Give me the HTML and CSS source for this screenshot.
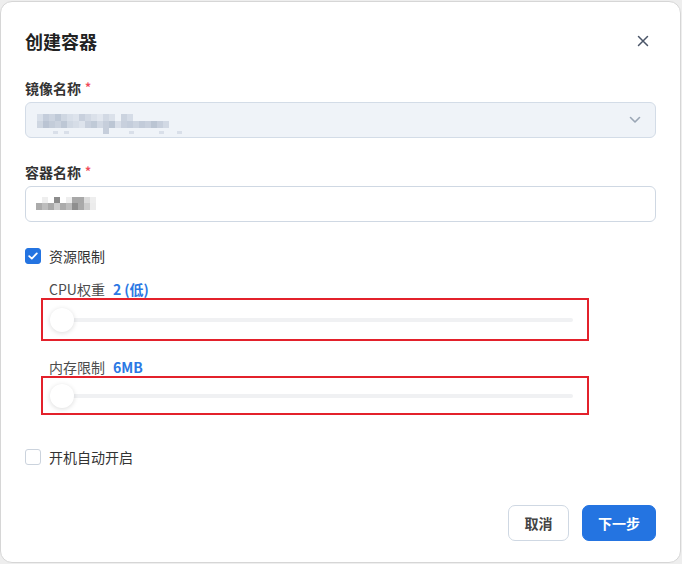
FILE: index.html
```html
<!DOCTYPE html>
<html lang="zh-CN">
<head>
  <meta charset="UTF-8">
  <title>创建容器</title>
  <meta name="viewport" content="width=device-width, initial-scale=1.0">
  <link rel="stylesheet" href="styles.css">
</head>
<body>
<div class="dialog">
  <div class="dialog-head">
    <div class="dialog-title">创建容器</div>
    <button class="close-btn" aria-label="关闭">
      <svg width="12" height="12" viewBox="0 0 12 12"><path d="M1.5 1.5L10.5 10.5M10.5 1.5L1.5 10.5" stroke="#4a5568" stroke-width="1.5" stroke-linecap="round"/></svg>
    </button>
  </div>

  <div class="field">
    <div class="field-label">镜像名称<span class="req">*</span></div>
    <div class="select">
      <svg class="mosaic" width="160" height="24" viewBox="0 0 160 24">
        <rect x="4" y="3" width="6" height="7" fill="#d8dfe9"/>
        <rect x="10" y="3" width="6" height="7" fill="#c4cddb"/>
        <rect x="16" y="3" width="6" height="7" fill="#ccd4e0"/>
        <rect x="22" y="3" width="6" height="7" fill="#bfc9d7"/>
        <rect x="28" y="3" width="6" height="7" fill="#cfd7e2"/>
        <rect x="34" y="3" width="6" height="7" fill="#d8dfe9"/>
        <rect x="40" y="3" width="6" height="7" fill="#dde3ec"/>
        <rect x="46" y="3" width="6" height="7" fill="#c8d0dd"/>
        <rect x="52" y="3" width="6" height="7" fill="#d2d9e4"/>
        <rect x="58" y="3" width="6" height="7" fill="#dbe1ea"/>
        <rect x="64" y="3" width="6" height="7" fill="#e2e7ef"/>
        <rect x="70" y="3" width="6" height="7" fill="#d2d9e4"/>
        <rect x="76" y="3" width="6" height="7" fill="#dbe1ea"/>
        <rect x="88" y="3" width="6" height="7" fill="#cbd3df"/>
        <rect x="94" y="3" width="6" height="7" fill="#d5dce7"/>
        <rect x="4" y="10" width="6" height="7" fill="#ced6e1"/>
        <rect x="10" y="10" width="6" height="7" fill="#bac4d3"/>
        <rect x="16" y="10" width="6" height="7" fill="#c3ccd9"/>
        <rect x="22" y="10" width="6" height="7" fill="#cad2de"/>
        <rect x="28" y="10" width="6" height="7" fill="#bdc7d5"/>
        <rect x="34" y="10" width="6" height="7" fill="#d0d8e3"/>
        <rect x="40" y="10" width="6" height="7" fill="#d6dde7"/>
        <rect x="46" y="10" width="6" height="7" fill="#dde3ec"/>
        <rect x="52" y="10" width="6" height="7" fill="#c8d0dd"/>
        <rect x="58" y="10" width="6" height="7" fill="#c0cad7"/>
        <rect x="64" y="10" width="6" height="7" fill="#d2d9e4"/>
        <rect x="70" y="10" width="6" height="7" fill="#c6cedb"/>
        <rect x="76" y="10" width="6" height="7" fill="#bcc6d4"/>
        <rect x="82" y="10" width="6" height="7" fill="#d9dfe9"/>
        <rect x="88" y="10" width="6" height="7" fill="#c8d0dd"/>
        <rect x="94" y="10" width="6" height="7" fill="#c4cddb"/>
        <rect x="100" y="10" width="6" height="7" fill="#ccd4e0"/>
        <rect x="106" y="10" width="6" height="7" fill="#c2cbd9"/>
        <rect x="112" y="10" width="6" height="7" fill="#c8d0dd"/>
        <rect x="118" y="10" width="6" height="7" fill="#bbc5d3"/>
        <rect x="124" y="10" width="6" height="7" fill="#c7cfdc"/>
        <rect x="130" y="10" width="6" height="7" fill="#d2d9e4"/>
        <rect x="70" y="17" width="6" height="6" fill="#c6cedb"/>
        <rect x="20" y="20" width="5" height="3" fill="#d9dfe9"/>
        <rect x="31" y="20" width="5" height="3" fill="#d9dfe9"/>
        <rect x="96" y="20" width="5" height="3" fill="#d9dfe9"/>
        <rect x="126" y="20" width="5" height="3" fill="#d9dfe9"/>
        <rect x="144" y="20" width="5" height="3" fill="#d9dfe9"/>
      </svg>
      <svg class="chevron" width="12" height="8" viewBox="0 0 12 8"><path d="M1.5 1.5L6 6L10.5 1.5" fill="none" stroke="#9aa6b5" stroke-width="1.6" stroke-linecap="round" stroke-linejoin="round"/></svg>
    </div>
  </div>

  <div class="field">
    <div class="field-label">容器名称<span class="req">*</span></div>
    <div class="input">
      <svg class="mosaic" width="64" height="16" viewBox="0 0 64 16">
        <rect x="6" y="1" width="6" height="6" fill="#eeeeee"/>
        <rect x="18" y="1" width="6" height="6" fill="#8c8c8c"/>
        <rect x="30" y="1" width="6" height="6" fill="#eeeeee"/>
        <rect x="36" y="1" width="12" height="6" fill="#a8a8a8"/>
        <rect x="48" y="1" width="6" height="6" fill="#dcdcdc"/>
        <rect x="54" y="1" width="6" height="6" fill="#eeeeee"/>
        <rect x="0" y="7" width="6" height="7" fill="#ababab"/>
        <rect x="6" y="7" width="6" height="7" fill="#bdbdbd"/>
        <rect x="12" y="7" width="6" height="7" fill="#a9a9a9"/>
        <rect x="18" y="7" width="6" height="7" fill="#cccccc"/>
        <rect x="24" y="7" width="6" height="7" fill="#ababab"/>
        <rect x="30" y="7" width="6" height="7" fill="#bcbcbc"/>
        <rect x="36" y="7" width="6" height="7" fill="#8e8e8e"/>
        <rect x="42" y="7" width="6" height="7" fill="#a9a9a9"/>
        <rect x="48" y="7" width="6" height="7" fill="#cccccc"/>
        <rect x="54" y="7" width="6" height="7" fill="#ececec"/>
      </svg>
    </div>
  </div>

  <label class="check-row res-row">
    <span class="checkbox checked">
      <svg width="10" height="8" viewBox="0 0 10 8"><path d="M1.2 4.2L3.8 6.6L8.8 1.4" fill="none" stroke="#fff" stroke-width="1.8" stroke-linecap="round" stroke-linejoin="round"/></svg>
    </span>
    资源限制
  </label>

  <div class="limits">
    <div class="limit-label cpu-label">CPU权重<span class="limit-value">2 (低)</span></div>
    <div class="slider-box cpu-box">
      <div class="slider"><div class="thumb"></div></div>
    </div>
    <div class="limit-label mem-label">内存限制<span class="limit-value">6MB</span></div>
    <div class="slider-box mem-box">
      <div class="slider"><div class="thumb"></div></div>
    </div>
  </div>

  <label class="check-row boot-row">
    <span class="checkbox"></span>
    开机自动开启
  </label>

  <div class="dialog-foot">
    <button class="btn btn-cancel">取消</button>
    <button class="btn btn-primary">下一步</button>
  </div>
</div>
</body>
</html>
```

FILE: styles.css
```css
:root {
  --blue: #2474e1;
  --text: #2b2b2b;
  --border: #cfd8e3;
}
html, body {
  margin: 0;
  padding: 0;
  background: #eeeeee;
}
body {
  font-family: "Noto Sans CJK SC", "Noto Sans", "Liberation Sans", sans-serif;
  color: var(--text);
  width: 682px;
  height: 564px;
  overflow: hidden;
}
.dialog {
  box-sizing: border-box;
  width: 681px;
  height: 562px;
  margin-top: 1px;
  background: #fff;
  border: 1px solid #d6d6d6;
  border-radius: 12px;
  padding: 27px 24px 20px 24px;
}
.dialog-head {
  display: flex;
  align-items: center;
  justify-content: space-between;
  height: 24px;
}
.dialog-title {
  font-size: 18px;
  font-weight: 700;
  line-height: 24px;
  color: #222;
}
.close-btn {
  background: none;
  border: none;
  padding: 0;
  width: 24px;
  height: 24px;
  display: flex;
  align-items: center;
  justify-content: center;
  margin-right: 1px;
  cursor: pointer;
}
.field {
  margin-top: 26px;
}
.field + .field {
  margin-top: 25px;
}
.field-label {
  font-size: 14px;
  font-weight: 700;
  line-height: 18px;
  height: 18px;
  color: #333;
}
.req {
  color: #f04a5a;
  font-size: 12px;
  line-height: 0;
  margin-left: 4px;
  vertical-align: 2px;
}
.select, .input {
  box-sizing: border-box;
  height: 36px;
  margin-top: 5px;
  border-radius: 6px;
  border: 1px solid var(--border);
  display: flex;
  align-items: center;
  padding: 0 14px 0 7px;
}
.select {
  background: #eff3f8;
  border-color: #d3dce7;
  justify-content: space-between;
}
.select .mosaic {
  margin-top: 6px;
}
.input {
  background: #fff;
  padding-left: 10px;
}
.check-row {
  display: flex;
  align-items: center;
  gap: 8px;
  font-size: 14px;
  line-height: 16px;
  color: #333;
  height: 16px;
}
.res-row {
  margin-top: 26px;
}
.boot-row {
  margin-top: 34px;
}
.checkbox {
  box-sizing: border-box;
  width: 16px;
  height: 16px;
  border-radius: 3px;
  border: 1px solid #cbd3dd;
  background: #fff;
  display: flex;
  align-items: center;
  justify-content: center;
}
.checkbox.checked {
  background: var(--blue);
  border-color: var(--blue);
}
.limits {
  padding-left: 24px;
}
.limit-label {
  font-size: 14px;
  line-height: 17px;
  height: 17px;
  color: #4d4d4d;
}
.cpu-label {
  margin-top: 17px;
}
.mem-label {
  margin-top: 18px;
}
.limit-value {
  color: #2b78e4;
  font-weight: 700;
  margin-left: 8px;
}
.slider-box {
  box-sizing: border-box;
  width: 548px;
  margin-left: -8px;
  border: 2px solid #e3212b;
  display: flex;
  align-items: center;
  padding: 0 14px 0 7px;
}
.cpu-box {
  height: 43px;
}
.mem-box {
  height: 39px;
}
.slider {
  position: relative;
  flex: 1;
  height: 4px;
  border-radius: 2px;
  background: #f0f1f3;
}
.thumb {
  position: absolute;
  left: 0;
  top: -10px;
  width: 24px;
  height: 24px;
  border-radius: 50%;
  background: #fff;
  box-shadow: 0 1px 5px rgba(0, 0, 0, 0.14);
}
.dialog-foot {
  display: flex;
  justify-content: flex-end;
  gap: 13px;
  margin-top: 40px;
}
.btn {
  box-sizing: border-box;
  height: 36px;
  border-radius: 7px;
  font-family: inherit;
  font-size: 14px;
  font-weight: 700;
  cursor: pointer;
}
.btn-cancel {
  width: 61px;
  background: #fff;
  border: 1px solid var(--border);
  color: #444;
}
.btn-primary {
  width: 74px;
  background: var(--blue);
  border: 1px solid var(--blue);
  color: #fff;
}
```
